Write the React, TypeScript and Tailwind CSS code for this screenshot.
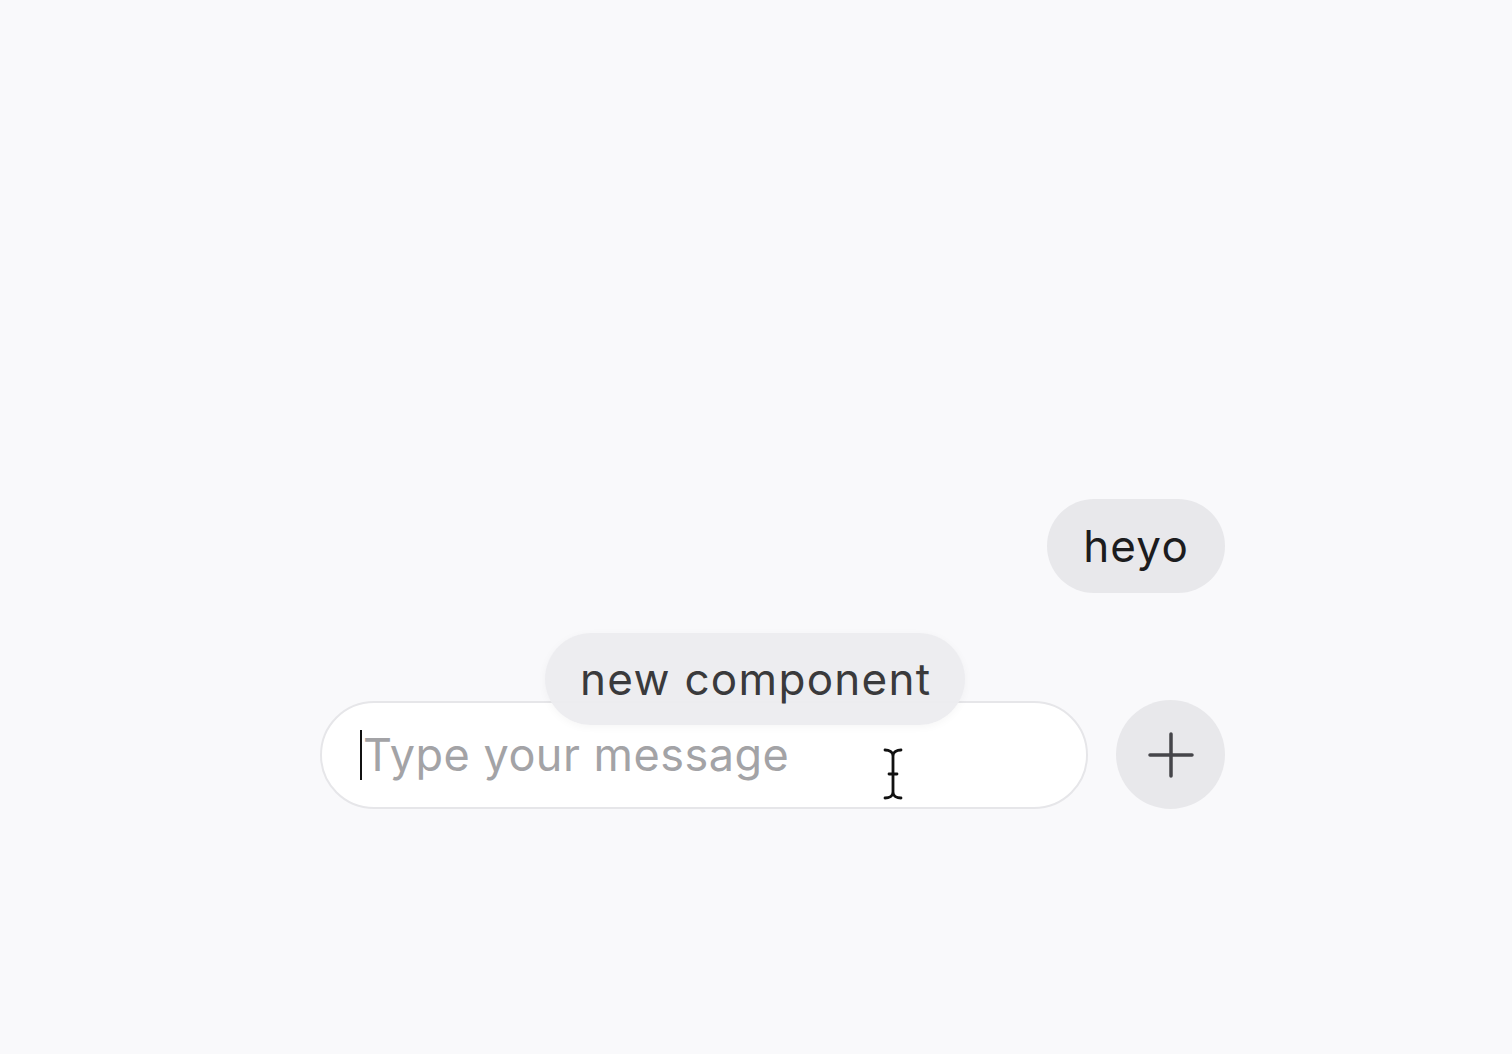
import React from "react";

const font = { fontFamily: "Inter, 'Liberation Sans', sans-serif" };

const PlusIcon: React.FC = () => (
  <svg width="46" height="46" viewBox="0 0 46 46" fill="none">
    <path d="M23 2v42M2 23h42" stroke="#45454a" strokeWidth="3.5" strokeLinecap="round" />
  </svg>
);

// mouse I-beam that sits over the input
const IBeam: React.FC = () => (
  <svg width="26" height="56" viewBox="0 0 26 56" fill="none">
    <path
      d="M5 4c4 0 8 2 8 6v36c0 4-4 6-8 6M21 4c-4 0-8 2-8 6v36c0 4 4 6 8 6M9 28h8"
      stroke="#ffffff"
      strokeWidth="6"
      strokeLinecap="round"
      opacity="0.9"
    />
    <path
      d="M5 4c4 0 8 2 8 6v36c0 4-4 6-8 6M21 4c-4 0-8 2-8 6v36c0 4 4 6 8 6M9 28h8"
      stroke="#111111"
      strokeWidth="2.8"
      strokeLinecap="round"
    />
  </svg>
);

const App: React.FC = () => {
  return (
    <div className="w-full h-[1054px] bg-[#f9f9fb] pl-[320px] pt-[499px] overflow-hidden" style={font}>
      <div className="w-[905px] flex flex-col">
        <div className="flex justify-end">
          <div className="h-[94px] px-[36px] rounded-full bg-[#e8e8eb] flex items-center text-[44px] tracking-[1.2px] text-[#1c1c1e]">
            heyo
          </div>
        </div>

        <div className="relative mt-[107px] flex items-center gap-[28px]">
          <div className="w-[768px] h-[108px] rounded-full bg-white border-2 border-[#e6e6e9] flex items-center pl-[38px]">
            <span className="w-[2px] h-[50px] bg-[#111] mr-[1px]" />
            <span className="text-[45px] tracking-[0.5px] text-[#a3a3a6]">Type your message</span>
          </div>
          <button className="w-[109px] h-[109px] rounded-full bg-[#e8e8eb] flex items-center justify-center">
            <PlusIcon />
          </button>

          <div className="absolute left-[225px] -top-[67px] h-[92px] w-[420px] rounded-full bg-[#ececef]/95 shadow-[0_2px_8px_rgba(0,0,0,0.04)] flex items-center pl-[35px] text-[44px] tracking-[1.3px] text-[#3a3a3c]">
            new component
          </div>

          <div className="absolute left-[560px] top-[46px]">
            <IBeam />
          </div>
        </div>
      </div>
    </div>
  );
};

export default App;
